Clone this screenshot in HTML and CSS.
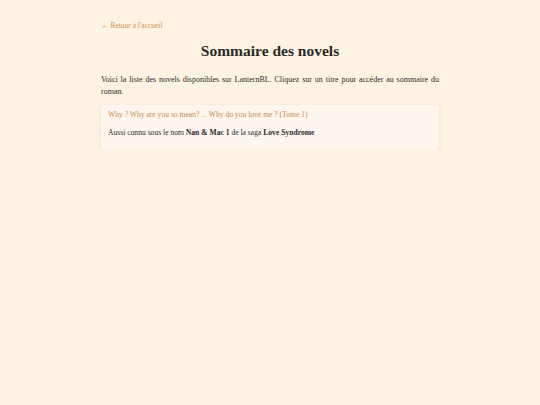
FILE: index.html
```html
<!DOCTYPE html>
<html lang="fr">
<head>
<meta charset="utf-8">
<title>Sommaire des novels</title>
<link rel="stylesheet" href="styles.css">
</head>
<body>
<main class="page">
  <a class="back" href="#">← Retour à l'accueil</a>
  <h1 class="title">Sommaire des novels</h1>
  <p class="intro">Voici la liste des novels disponibles sur LanternBL. Cliquez sur un titre pour accéder au sommaire du roman.</p>
  <ul class="novels">
    <li class="card">
      <a class="card-title" href="#">Why ? Why are you so mean? ... Why do you love me ? (Tome 1)</a>
      <p class="card-text">Aussi connu sous le nom <strong>Nan &amp; Mac 1</strong> de la saga <strong>Love Syndrome</strong></p>
    </li>
  </ul>
</main>
</body>
</html>
```

FILE: styles.css
```css
html, body {
  margin: 0;
  padding: 0;
  background: #fdf3e3;
}
body {
  font-family: "Liberation Serif", "DejaVu Serif", serif;
  color: #2e2a27;
}
.page {
  width: 338px;
  margin: 0 auto;
  padding-top: 20px;
}
.back {
  display: block;
  font-size: 7.5px;
  line-height: 12px;
  color: #d3904f;
  text-decoration: none;
}
.title {
  margin: 9px 0 0;
  font-size: 15.5px;
  line-height: 20px;
  text-align: center;
  font-weight: bold;
  color: #2e2a27;
}
.intro {
  margin: 13px 0 0;
  font-size: 8px;
  line-height: 12px;
  text-align: justify;
}
.novels {
  list-style: none;
  margin: 7px 0 0;
  padding: 0;
}
.card {
  background: #fff6ef;
  border-radius: 4px;
  box-shadow: 0 1px 4px rgba(120, 90, 50, 0.14);
  padding: 4px 7px 11px;
}
.card-title {
  display: block;
  font-size: 7.6px;
  line-height: 12px;
  color: #cc8646;
  text-decoration: none;
}
.card-text {
  margin: 6px 0 0;
  font-size: 7.6px;
  line-height: 12px;
}
.card-text strong {
  font-weight: bold;
}
```
